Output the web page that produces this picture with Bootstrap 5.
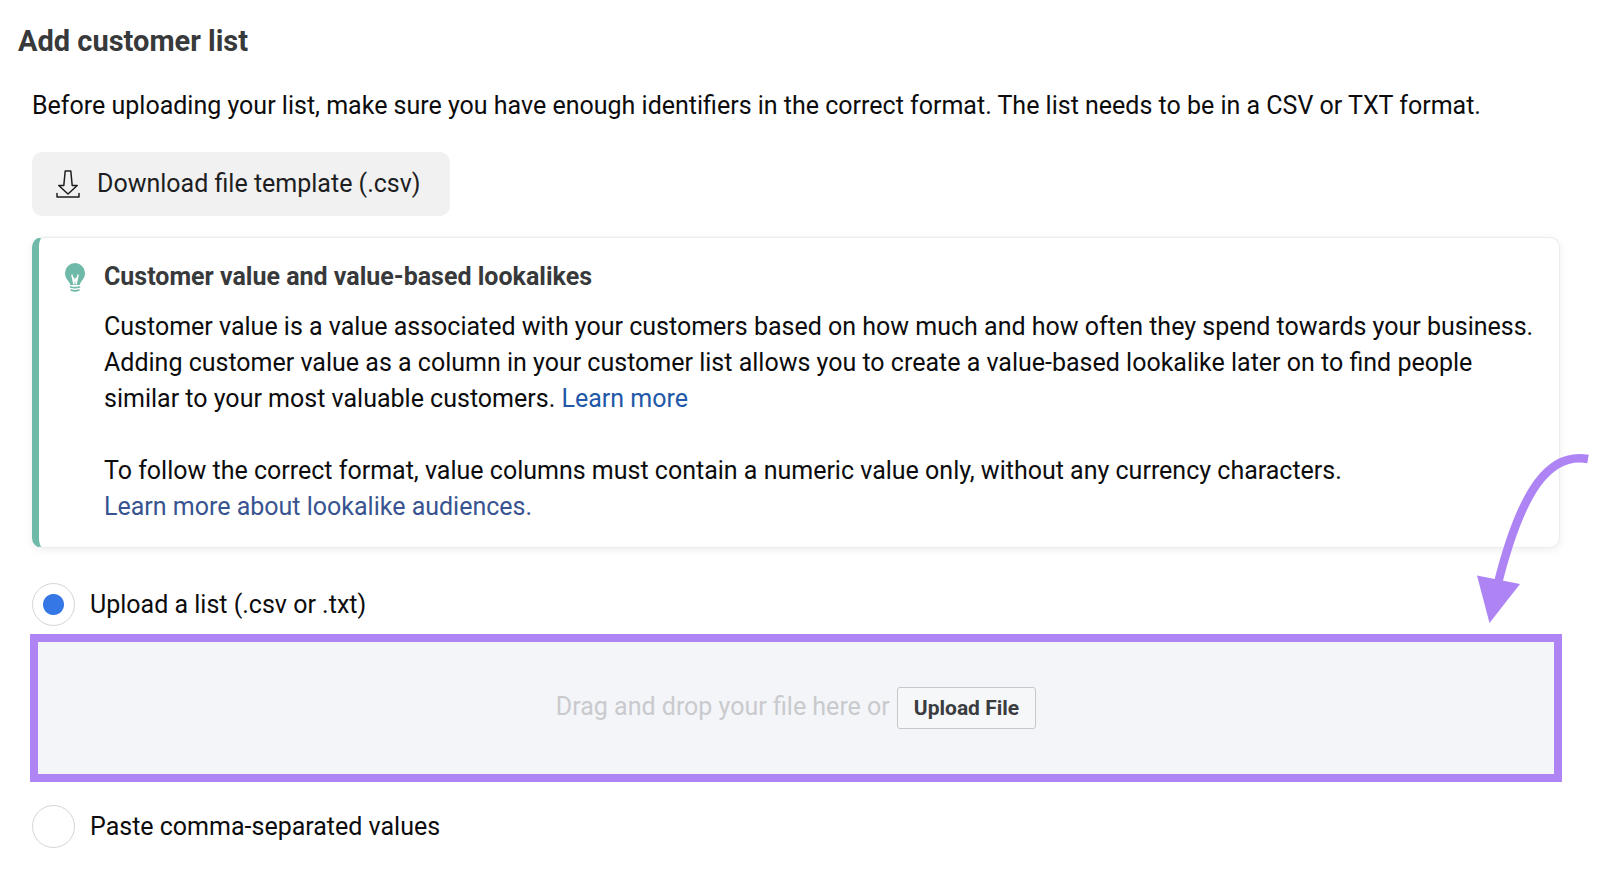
<!DOCTYPE html>
<html lang="en">
<head>
<meta charset="utf-8">
<meta name="viewport" content="width=device-width, initial-scale=1">
<title>Add customer list</title>
<link href="https://cdn.jsdelivr.net/npm/bootstrap@5.3.0/dist/css/bootstrap.min.css" rel="stylesheet">
<style>
  body { font-family: Roboto, "Liberation Sans", sans-serif; font-size: 25px; line-height: 36px; color: #0c0c0d; background: #fff; }
  .page { padding: 24px 40px 24px 32px; }
  .page-title { font-size: 29px; line-height: 34px; font-weight: 700; color: #38393b; margin: 0 0 30px -14px; }
  .template-row { margin: 28px 0 21px; }
  .btn-template { background: #f1f1f1; color: #1c1e21; font-size: 25px; line-height: 36px; border: 0; border-radius: 10px; padding: 14px 29px 14px 24px; gap: 17px; }
  .btn-template:hover { background: #e6e6e6; }
  .tip { border: 1px solid #ececee; border-left: 7px solid #6fb9a8; border-radius: 10px; box-shadow: 0 2px 8px rgba(0,0,0,.07); padding: 21px 16px 22px 26px; gap: 19px; margin-bottom: 35px; }
  .tip-title { font-size: 25px; line-height: 36px; font-weight: 700; color: #38393b; margin-bottom: 14px; }
  .tip-text { margin-bottom: 36px; }
  .tip a { text-decoration: none; color: #385490; }
  .tip a.link-bright { color: #2158a8; }
  .choice { gap: 15px; }
  .choice .form-check-input { width: 43px; height: 43px; margin: 0; border: 1px solid #d3d4d6; background-color: #fff; background-size: 100%; flex: none; }
  .choice .form-check-input:checked { background-image: radial-gradient(circle, #3578e5 10px, transparent 11px); }
  .drop-wrap { margin: 8px -2px 23px; }
  .dropzone { border: 8px solid #ae84f5; background: #f4f5f8; color: #c9cacd; padding: 45px 16px; gap: 7px; }
  .btn-upload { font-size: 21px; line-height: 24px; font-weight: 700; color: #3a3c40; background: #f6f7f9; border: 1px solid #c6c8cc; border-radius: 3px; padding: 8px 16px; }
  .pointer { right: -28px; bottom: calc(100% + 8px); pointer-events: none; }
</style>
</head>
<body>
<main class="page overflow-hidden">
  <h1 class="page-title">Add customer list</h1>
  <p class="mb-0">Before uploading your list, make sure you have enough identifiers in the correct format. The list needs to be in a CSV or TXT format.</p>

  <div class="template-row d-flex">
    <button type="button" class="btn btn-template d-flex align-items-center">
      <svg width="24" height="28" viewBox="0 0 24 28" fill="none" stroke="#1c1e21" stroke-width="1.5" stroke-linejoin="round" stroke-linecap="round" aria-hidden="true">
        <path d="M9.200 1h5.600l1.400 14.500h5L12 24 2.800 15.500h5z"/>
        <path d="M1 23.500v3.500h22v-3.500"/>
      </svg>
      <span>Download file template (.csv)</span>
    </button>
  </div>

  <section class="tip d-flex align-items-start">
    <svg class="flex-shrink-0 mt-1" width="20" height="29" viewBox="0 0 20 29" aria-hidden="true">
      <path fill="#6fb9a8" d="M10 0a10 10 0 0 1 10 10c0 4.500-2.300 6.500-4 9-.8 1.200-1 2.500-1.600 3H5.600C5 21.500 4.800 20.200 4 19c-1.700-2.500-4-4.500-4-9A10 10 0 0 1 10 0z"/>
      <path d="M6.800 11.500 9 21.500M13.200 11.500 11 21.500M8.400 14.500l1.600 4 1.600-4" fill="none" stroke="#fff" stroke-width="1.400"/>
      <path d="M5.500 24q4.500 1.200 9 0M6 27q4 1.800 8 0" fill="none" stroke="#6fb9a8" stroke-width="1.600" stroke-linecap="round"/>
    </svg>
    <div>
      <h2 class="tip-title">Customer value and value-based lookalikes</h2>
      <p class="tip-text">Customer value is a value associated with your customers based on how much and how often they spend towards your business. Adding customer value as a column in your customer list allows you to create a value-based lookalike later on to find people similar to your most valuable customers. <a class="link-bright" href="#">Learn more</a></p>
      <p class="mb-0">To follow the correct format, value columns must contain a numeric value only, without any currency characters.<br><a href="#">Learn more about lookalike audiences.</a></p>
    </div>
  </section>

  <div class="choice d-flex align-items-center">
    <input class="form-check-input" type="radio" name="source" id="source-file" checked>
    <label for="source-file">Upload a list (.csv or .txt)</label>
  </div>

  <div class="drop-wrap position-relative">
    <div class="dropzone d-flex flex-wrap justify-content-center align-items-baseline">
      <span>Drag and drop your file here or</span>
      <button type="button" class="btn btn-upload">Upload File</button>
    </div>
    <svg class="pointer position-absolute" width="120" height="176" viewBox="0 0 120 176" aria-hidden="true">
      <path d="M118 9C80 2 52 38 28 133" fill="none" stroke="#ae84f5" stroke-width="8.500"/>
      <path d="M7 125.500 50 134 19.500 173z" fill="#ae84f5"/>
    </svg>
  </div>

  <div class="choice d-flex align-items-center">
    <input class="form-check-input" type="radio" name="source" id="source-paste">
    <label for="source-paste">Paste comma-separated values</label>
  </div>
</main>
<script src="https://cdn.jsdelivr.net/npm/bootstrap@5.3.0/dist/js/bootstrap.bundle.min.js"></script>
</body>
</html>
